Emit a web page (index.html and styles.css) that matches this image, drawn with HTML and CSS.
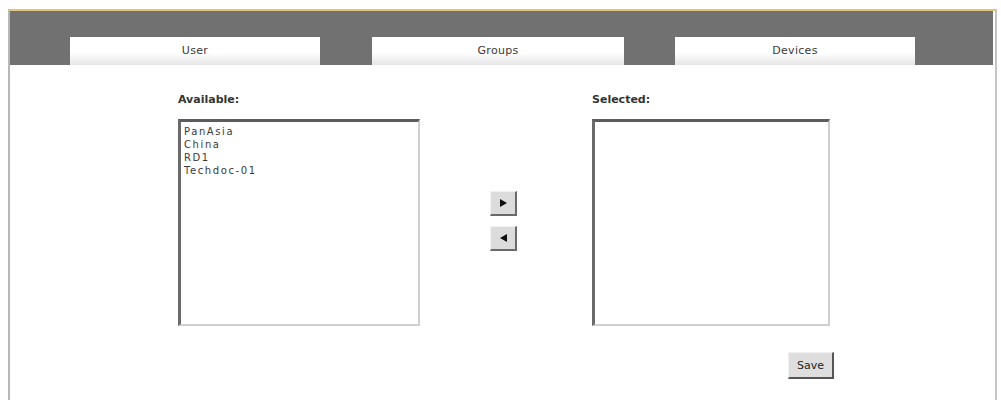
FILE: index.html
```html
<!DOCTYPE html>
<html lang="en">
<head>
    <meta charset="UTF-8">
    <title>Assign Groups</title>
    <link rel="stylesheet" href="styles.css">
</head>
<body>
<div class="panel">
    <div class="tabbar">
        <div class="tab tab-user">User</div>
        <div class="tab tab-groups">Groups</div>
        <div class="tab tab-devices">Devices</div>
    </div>

    <div class="picker">
        <div class="column column-available">
            <div class="list-label">Available:</div>
            <div class="listbox">
                <div class="list-item">PanAsia</div>
                <div class="list-item">China</div>
                <div class="list-item">RD1</div>
                <div class="list-item">Techdoc-01</div>
            </div>
        </div>

        <div class="movers">
            <button type="button" class="mover"><span class="arrow arrow-right"></span></button>
            <button type="button" class="mover"><span class="arrow arrow-left"></span></button>
        </div>

        <div class="column column-selected">
            <div class="list-label">Selected:</div>
            <div class="listbox"></div>
        </div>
    </div>

    <div class="actions">
        <button type="button" class="save">Save</button>
    </div>
</div>
</body>
</html>
```

FILE: styles.css
```css
body {
    margin: 0;
    padding: 9px 0 0 0;
    background-color: #ffffff;
    font-family: "DejaVu Sans", Verdana, sans-serif;
    color: #222222;
}

.panel {
    width: 989px;
    height: 391px;
    margin-left: 8px;
    border-left: 2px solid #b8b8b8;
    border-right: 2px solid #c4c4c4;
    border-top: 2px solid #e2c57a;
    box-sizing: border-box;
}

.tabbar {
    display: flex;
    align-items: flex-end;
    height: 54px;
    margin-right: 2px;
    padding-left: 60px;
    padding-right: 77px;
    background-color: #717171;
    box-sizing: border-box;
}

.tab {
    height: 28px;
    line-height: 28px;
    text-align: center;
    font-size: 11px;
    color: #3a3a3a;
    letter-spacing: 0.3px;
    background: linear-gradient(#ffffff, #ffffff 55%, #e6e6e6);
}

.tab-user {
    width: 250px;
}

.tab-groups {
    width: 252px;
    margin-left: 52px;
}

.tab-devices {
    width: 240px;
    margin-left: 51px;
}

.picker {
    display: flex;
    padding-left: 168px;
    margin-top: 28px;
}

.column {
    display: flex;
    flex-direction: column;
}

.column-available {
    width: 242px;
}

.column-selected {
    width: 238px;
}

.list-label {
    font-size: 11px;
    font-weight: bold;
    color: #333333;
    height: 13px;
    line-height: 13px;
    margin-bottom: 13px;
}

.listbox {
    height: 207px;
    border-top: 3px solid #5c5c5c;
    border-left: 3px solid #6a6a6a;
    border-right: 2px solid #cfcfcf;
    border-bottom: 2px solid #cfcfcf;
    box-sizing: border-box;
    padding: 3px 0 0 3px;
    background-color: #ffffff;
}

.list-item {
    font-size: 10px;
    line-height: 13px;
    letter-spacing: 1.6px;
    color: #3a3a3a;
}

.movers {
    display: flex;
    flex-direction: column;
    gap: 10px;
    margin-left: 70px;
    margin-right: 75px;
    padding-top: 98px;
}

.mover {
    width: 27px;
    height: 25px;
    padding: 0;
    display: flex;
    align-items: center;
    justify-content: center;
    background-color: #dcdcdc;
    border-top: 1px solid #f2f2f2;
    border-left: 1px solid #f2f2f2;
    border-right: 2px solid #6a6a6a;
    border-bottom: 2px solid #6a6a6a;
}

.arrow {
    width: 0;
    height: 0;
    border-top: 4px solid transparent;
    border-bottom: 4px solid transparent;
}

.arrow-right {
    border-left: 7px solid #111111;
}

.arrow-left {
    border-right: 7px solid #111111;
}

.actions {
    display: flex;
    padding-left: 778px;
    margin-top: 26px;
}

.save {
    width: 46px;
    height: 27px;
    padding: 0;
    font-family: "DejaVu Sans", Verdana, sans-serif;
    font-size: 11px;
    color: #222222;
    background-color: #dedede;
    border-top: 1px solid #f0f0f0;
    border-left: 1px solid #f0f0f0;
    border-right: 2px solid #555555;
    border-bottom: 2px solid #555555;
}
```
